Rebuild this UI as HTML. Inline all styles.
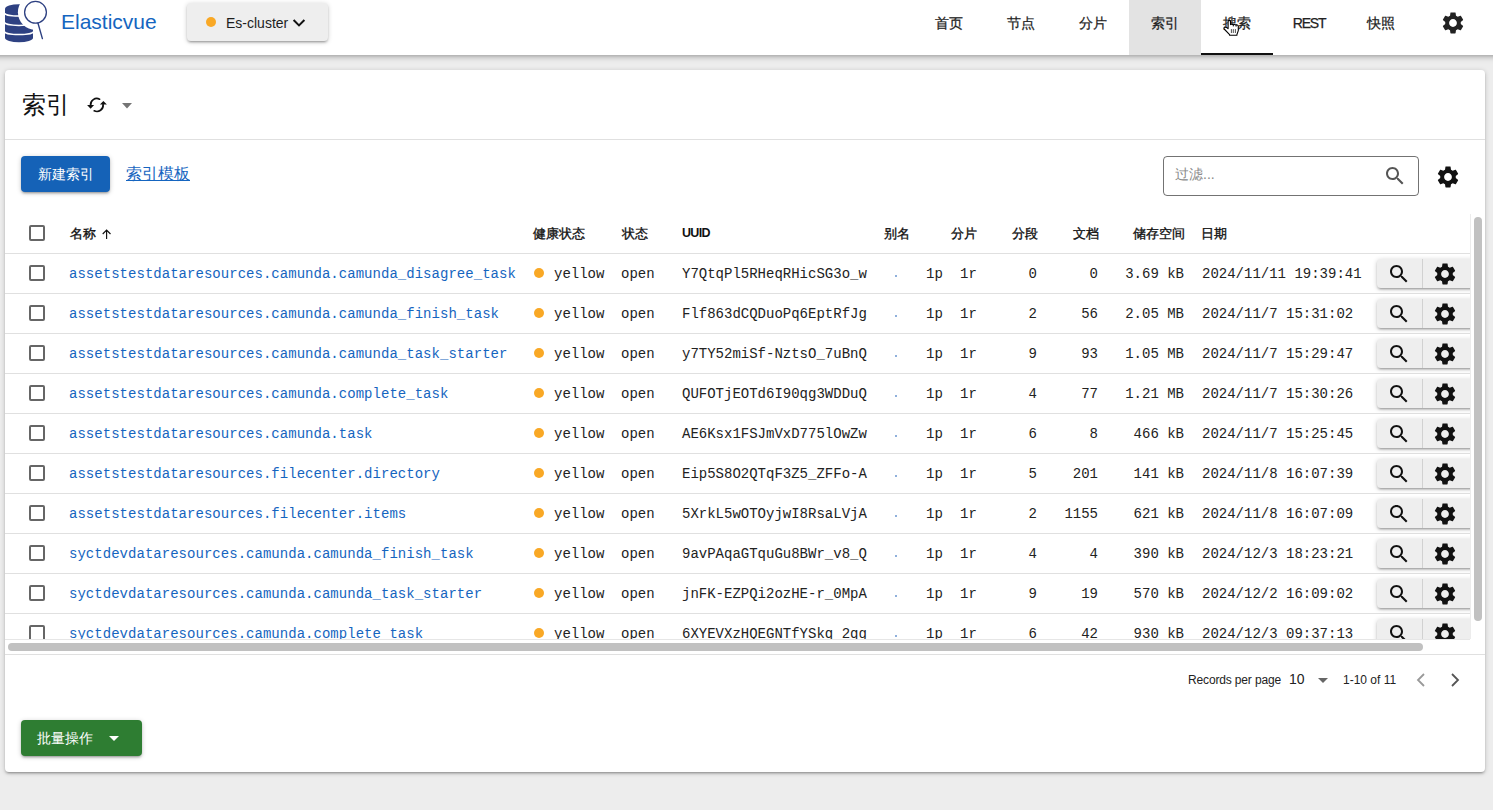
<!DOCTYPE html>
<html><head><meta charset="utf-8">
<style>
*{box-sizing:border-box;margin:0;padding:0}
html,body{width:1493px;height:810px;overflow:hidden;background:#ededed;font-family:"Liberation Sans",sans-serif;color:rgba(0,0,0,.87)}
.abs{position:absolute}
#hdr{position:absolute;left:-20px;top:0;width:1533px;height:55px;background:#fff;box-shadow:0 2px 4px -1px rgba(0,0,0,.25),0 4px 5px rgba(0,0,0,.1);z-index:5}
.brand{position:absolute;left:61px;top:10px;font-size:21px;color:#1565c0;white-space:nowrap}
.clbtn{position:absolute;left:187px;top:3px;width:141px;height:38px;background:#eee;border-radius:4px;box-shadow:0 1px 5px rgba(0,0,0,.2),0 2px 2px rgba(0,0,0,.14),0 3px 1px -2px rgba(0,0,0,.12)}
.tab{position:absolute;top:0;height:55px;width:72px;font-size:14px;text-align:center;line-height:46px;color:#222;-webkit-text-stroke:0.25px #222;white-space:nowrap}
#card{position:absolute;left:5px;top:70px;width:1480px;height:702px;background:#fff;border-radius:4px;box-shadow:0 1px 5px rgba(0,0,0,.2),0 2px 2px rgba(0,0,0,.14),0 3px 1px -2px rgba(0,0,0,.12)}
.title{position:absolute;left:17px;top:19px;font-size:24px;color:#111;white-space:nowrap}
.divider{position:absolute;left:0;height:1px;width:1480px;background:rgba(0,0,0,.12)}
.btnblue{position:absolute;left:16px;top:86px;width:89px;height:36px;background:#1562b7;border-radius:4px;color:#fff;font-size:14px;text-align:center;line-height:36px;box-shadow:0 1px 5px rgba(0,0,0,.2),0 2px 2px rgba(0,0,0,.14),0 3px 1px -2px rgba(0,0,0,.12)}
.link{position:absolute;left:121px;top:94px;font-size:16px;color:#1565c0;text-decoration:underline;white-space:nowrap}
.filter{position:absolute;left:1158px;top:86px;width:256px;height:40px;border:1px solid rgba(0,0,0,.55);border-radius:4px}
.ph{position:absolute;left:11px;top:9px;font-size:14px;color:#8a8a8a;white-space:nowrap}
#tbl{position:absolute;left:0;top:144px;width:1465px;height:425px;overflow:hidden}
.in{position:absolute;left:3px;top:0;width:1462px;height:40px}
.hrow{position:absolute;left:0;top:0;width:1465px;height:40px;border-bottom:1px solid rgba(0,0,0,.12)}
.th{position:absolute;top:11px;font-size:13px;font-weight:normal;-webkit-text-stroke:0.35px #111;color:#111;white-space:nowrap}
.row{position:absolute;left:0;width:1465px;height:40px;border-bottom:1px solid rgba(0,0,0,.12)}
.cb{position:absolute;width:16px;height:16px;border:2px solid #666;border-radius:2px}
.nm{position:absolute;top:12px;font-family:"Liberation Mono",monospace;font-size:14px;letter-spacing:0.03px;color:#1565c0;white-space:nowrap}
.mono{position:absolute;top:12px;font-family:"Liberation Mono",monospace;font-size:14px;color:#222;white-space:nowrap}
.dot{position:absolute;top:14px;width:10px;height:10px;border-radius:50%;background:#f9a825}
.adot{position:absolute;top:21px;width:2px;height:2px;background:#8fb0dc}
.btns{position:absolute;top:5px;width:110px;height:29px;background:#eee;border-radius:4px;box-shadow:0 1px 5px rgba(0,0,0,.2),0 2px 2px rgba(0,0,0,.14),0 3px 1px -2px rgba(0,0,0,.12)}
.b1{position:absolute;left:0;top:0;width:46px;height:29px;border-right:1px solid rgba(0,0,0,.12);color:#111}
.b2{position:absolute;left:47px;top:0;width:47px;height:29px;color:#111}
.b1 svg{position:absolute;left:10px;top:3px}
.b2 svg{position:absolute;left:8px;top:2px}
.vsb{position:absolute;left:1469px;top:147px;width:8px;height:404px;border-radius:4px;background:#c1c1c1}
.hsb{position:absolute;left:3px;top:573px;width:1415px;height:8px;border-radius:4px;background:#c1c1c1}
.btngreen{position:absolute;left:16px;top:650px;width:121px;height:36px;background:#2e7d32;border-radius:4px;color:#fff;font-size:14px;box-shadow:0 1px 5px rgba(0,0,0,.2),0 2px 2px rgba(0,0,0,.14),0 3px 1px -2px rgba(0,0,0,.12)}
.pg{position:absolute;font-size:12px;color:#222;white-space:nowrap}
</style></head><body>
<div id="hdr"><div class="abs" style="left:20px;top:0;width:1493px;height:55px">
 <svg class="abs" style="left:0;top:0" width="50" height="46" viewBox="0 0 50 46">
 <defs><mask id="lm" maskUnits="userSpaceOnUse" x="0" y="0" width="50" height="46">
  <rect x="0" y="0" width="50" height="46" fill="#fff"/>
  <circle cx="35.5" cy="12.3" r="17.6" fill="#000"/>
  <path d="M4.6 13 A14.4 3.1 0 0 0 33.4 13" fill="none" stroke="#000" stroke-width="1.5"/>
  <path d="M4.6 22.3 A14.4 3.1 0 0 0 33.4 22.3" fill="none" stroke="#000" stroke-width="1.5"/>
  <path d="M4.6 31.5 A14.4 3.1 0 0 0 33.4 31.5" fill="none" stroke="#000" stroke-width="1.5"/>
 </mask></defs>
 <g fill="#2e4182" mask="url(#lm)">
  <ellipse cx="19" cy="9" rx="14" ry="4.8"/>
  <rect x="5" y="9" width="28" height="29"/>
  <ellipse cx="19" cy="38" rx="14" ry="4.2"/>
 </g>
 <circle cx="35.5" cy="12.3" r="10.9" fill="none" stroke="#2e4182" stroke-width="1.3"/>
 <line x1="38" y1="23.2" x2="42.4" y2="38.6" stroke="#2e4182" stroke-width="1.4" stroke-linecap="round"/>
</svg>
 <div class="brand">Elasticvue</div>
 <div class="clbtn">
   <span class="abs" style="left:19px;top:14px;width:10px;height:10px;border-radius:50%;background:#f9a825"></span>
   <span class="abs" style="left:39px;top:12px;font-size:14px;color:#1d1d1d;white-space:nowrap">Es-cluster</span>
   <svg class="abs" style="left:105px;top:15px" width="14" height="10" viewBox="0 0 14 10"><path d="M1.6 2 L7 7.4 L12.4 2" fill="none" stroke="#111" stroke-width="2"/></svg>
 </div>
 <div class="tab" style="left:913px">首页</div>
 <div class="tab" style="left:985px">节点</div>
 <div class="tab" style="left:1057px">分片</div>
 <div class="tab" style="left:1129px;background:#e3e3e3">索引</div>
 <div class="tab" style="left:1201px">搜索<div class="abs" style="left:0;top:53px;width:72px;height:2px;background:#111"></div></div>
 <div class="tab" style="left:1273px;letter-spacing:-1.2px">REST</div>
 <div class="tab" style="left:1345px">快照</div>
 <div class="abs" style="left:1440px;top:10px;color:#222"><svg viewBox="0 0 24 24" width="26" height="26" style="display:block"><path d="M19.14 12.94c.04-.3.06-.61.06-.94 0-.32-.02-.64-.07-.94l2.03-1.58c.18-.14.23-.41.12-.61l-1.92-3.32c-.12-.22-.37-.29-.59-.22l-2.39.96c-.5-.38-1.03-.7-1.62-.94l-.36-2.54c-.04-.24-.24-.41-.48-.41h-3.84c-.24 0-.43.17-.47.41l-.36 2.54c-.59.24-1.130.57-1.62.94l-2.39-.96c-.22-.08-.47 0-.59.22L2.740 8.87c-.12.21-.08.47.12.61l2.03 1.58c-.05.3-.09.63-.09.94s.02.64.07.94l-2.03 1.58c-.18.14-.23.41-.12.61l1.92 3.32c.12.22.37.29.59.22l2.39-.96c.5.38 1.03.7 1.62.94l.36 2.54c.05.24.24.41.48.41h3.84c.24 0 .44-.17.47-.41l.36-2.54c.59-.24 1.13-.56 1.62-.94l2.39.96c.22.08.47 0 .59-.22l1.92-3.32c.12-.22.07-.47-.12-.61l-2.01-1.58zM12 15.6c-1.98 0-3.6-1.62-3.6-3.6s1.62-3.6 3.6-3.6 3.6 1.62 3.6 3.6-1.62 3.6-3.6 3.6z" fill="currentColor"/></svg></div>
 <svg class="abs" style="left:1215px;top:10px;z-index:9" width="40" height="30" viewBox="1215 10 40 30">
 <path d="M1228.1 28.3 L1228.1 21.3 Q1229.3 19.5 1230.5 21.3 L1230.5 24.6 Q1231.9 23.9 1233.3 24.7 Q1234.7 24.1 1236.1 24.9 Q1237.6 24.5 1238.3 26 L1238.3 30.6 L1236.9 34.6 L1236.9 35.3 L1229.6 35.3 L1229.6 34.6 L1224.2 29 Q1223.5 27.6 1224.8 27.1 Q1226.5 27 1228.1 28.6 Z" fill="#fff" stroke="#000" stroke-width="1.1" stroke-linejoin="round"/>
 <path d="M1231.4 29.1 V33 M1233.3 29.1 V33 M1235.4 29.1 V33" stroke="#222" stroke-width=".8"/>
 <path d="M1233.3 24.6 V26.4 M1236.1 24.8 V26.6" stroke="#000" stroke-width="1"/>
</svg>
</div></div>
<div id="card">
 <div class="title">索引</div>
 <svg class="abs" style="left:79px;top:24px" width="28" height="22" viewBox="84 94 28 22">
 <path d="M99.6 99.2 A6.2 6.2 0 0 0 90.6 105.3" fill="none" stroke="#111" stroke-width="1.7" stroke-linecap="round"/>
 <path d="M87.1 105.1 L94.1 105.1 L90.6 108.7 Z" fill="#111"/>
 <path d="M94.2 110.8 A6.2 6.2 0 0 0 103.1 104.5" fill="none" stroke="#111" stroke-width="1.7" stroke-linecap="round"/>
 <path d="M99.9 104.6 L106.9 104.6 L103.4 101.1 Z" fill="#111"/>
</svg>
 <svg class="abs" style="left:117px;top:33px" width="10" height="6" viewBox="0 0 10 6"><path d="M0 0 L10 0 L5 5.5 Z" fill="#757575"/></svg>
 <div class="divider" style="top:69px"></div>
 <div class="btnblue">新建索引</div>
 <div class="link">索引模板</div>
 <div class="filter"><span class="ph">过滤...</span><span class="abs" style="left:219px;top:7px;color:#555"><svg viewBox="0 0 24 24" width="24" height="24" style="display:block"><path d="M15.5 14h-.79l-.28-.27C15.41 12.59 16 11.11 16 9.5 16 5.91 13.09 3 9.5 3S3 5.910 3 9.5 5.91 16 9.5 16c1.61 0 3.09-.59 4.23-1.57l.27.28v.79l5 4.99L20.49 19l-4.99-5zm-6 0C7.01 14 5 11.99 5 9.5S7.01 5 9.5 5 14 7.01 14 9.5 11.99 14 9.5 14z" fill="currentColor"/></svg></span></div>
 <div class="abs" style="left:1430px;top:94px;color:#111"><svg viewBox="0 0 24 24" width="26" height="26" style="display:block"><path d="M19.14 12.94c.04-.3.06-.61.06-.94 0-.32-.02-.64-.07-.94l2.03-1.58c.18-.14.23-.41.12-.61l-1.92-3.32c-.12-.22-.37-.29-.59-.22l-2.39.96c-.5-.38-1.03-.7-1.62-.94l-.36-2.54c-.04-.24-.24-.41-.48-.41h-3.84c-.24 0-.43.17-.47.41l-.36 2.54c-.59.24-1.130.57-1.62.94l-2.39-.96c-.22-.08-.47 0-.59.22L2.740 8.87c-.12.21-.08.47.12.61l2.03 1.58c-.05.3-.09.63-.09.94s.02.64.07.94l-2.03 1.58c-.18.14-.23.41-.12.61l1.92 3.32c.12.22.37.29.59.22l2.39-.96c.5.38 1.03.7 1.62.94l.36 2.54c.05.24.24.41.48.41h3.84c.24 0 .44-.17.47-.41l.36-2.54c.59-.24 1.13-.56 1.62-.94l2.39.96c.22.08.47 0 .59-.22l1.92-3.32c.12-.22.07-.47-.12-.61l-2.01-1.58zM12 15.6c-1.98 0-3.6-1.62-3.6-3.6s1.62-3.6 3.6-3.6 3.6 1.62 3.6 3.6-1.62 3.6-3.6 3.6z" fill="currentColor"/></svg></div>
 <div id="tbl">
  <div class="hrow"><div class="in">
   <div class="cb" style="left:21px;top:11px"></div>
   <div class="th" style="left:62px">名称</div>
   <svg class="abs" style="left:94px;top:15px" width="10" height="11" viewBox="0 0 10 11"><path d="M4.6 1.2 V10 M0.7 5 L4.6 1.1 L8.5 5" fill="none" stroke="#111" stroke-width="1.15"/></svg>
   <div class="th" style="left:525px">健康状态</div>
   <div class="th" style="left:614px">状态</div>
   <div class="th" style="left:674px;top:12px;font-weight:bold;-webkit-text-stroke:0;font-size:12.5px;letter-spacing:-0.7px">UUID</div>
   <div class="th" style="left:876px">别名</div>
   <div class="th" style="left:943px">分片</div>
   <div class="th" style="left:1004px">分段</div>
   <div class="th" style="left:1065px">文档</div>
   <div class="th" style="left:1125px">储存空间</div>
   <div class="th" style="left:1193px">日期</div>
  </div></div>
  <div class="row" style="top:40px"><div class="in">
<div class="cb" style="left:21px;top:11px"></div>
<span class="nm" style="left:61px">assetstestdataresources.camunda.camunda_disagree_task</span>
<span class="dot" style="left:526px"></span>
<span class="mono" style="left:546px">yellow</span>
<span class="mono" style="left:613px">open</span>
<span class="mono" style="left:674px">Y7QtqPl5RHeqRHicSG3o_w</span>
<span class="adot" style="left:887px"></span>
<span class="mono" style="left:918px">1p</span>
<span class="mono" style="left:952px">1r</span>
<span class="mono r" style="right:433px">0</span>
<span class="mono r" style="right:372px">0</span>
<span class="mono r" style="right:286px">3.69 kB</span>
<span class="mono" style="left:1194px">2024/11/11 19:39:41</span>
<div class="btns" style="left:1369px"><div class="b1"><svg viewBox="0 0 24 24" width="24" height="24" style="display:block"><path d="M15.5 14h-.79l-.28-.27C15.41 12.59 16 11.11 16 9.5 16 5.91 13.09 3 9.5 3S3 5.910 3 9.5 5.91 16 9.5 16c1.61 0 3.09-.59 4.23-1.57l.27.28v.79l5 4.99L20.49 19l-4.99-5zm-6 0C7.01 14 5 11.99 5 9.5S7.01 5 9.5 5 14 7.01 14 9.5 11.99 14 9.5 14z" fill="currentColor"/></svg></div><div class="b2"><svg viewBox="0 0 24 24" width="26" height="26" style="display:block"><path d="M19.14 12.94c.04-.3.06-.61.06-.94 0-.32-.02-.64-.07-.94l2.03-1.58c.18-.14.23-.41.12-.61l-1.92-3.32c-.12-.22-.37-.29-.59-.22l-2.39.96c-.5-.38-1.03-.7-1.62-.94l-.36-2.54c-.04-.24-.24-.41-.48-.41h-3.84c-.24 0-.43.17-.47.41l-.36 2.54c-.59.24-1.130.57-1.62.94l-2.39-.96c-.22-.08-.47 0-.59.22L2.740 8.87c-.12.21-.08.47.12.61l2.03 1.58c-.05.3-.09.63-.09.94s.02.64.07.94l-2.03 1.58c-.18.14-.23.41-.12.61l1.92 3.32c.12.22.37.29.59.22l2.39-.96c.5.38 1.03.7 1.62.94l.36 2.54c.05.24.24.41.48.41h3.84c.24 0 .44-.17.47-.41l.36-2.54c.59-.24 1.13-.56 1.62-.94l2.39.96c.22.08.47 0 .59-.22l1.92-3.32c.12-.22.07-.47-.12-.61l-2.01-1.58zM12 15.6c-1.98 0-3.6-1.62-3.6-3.6s1.62-3.6 3.6-3.6 3.6 1.62 3.6 3.6-1.62 3.6-3.6 3.6z" fill="currentColor"/></svg></div></div>
</div></div><div class="row" style="top:80px"><div class="in">
<div class="cb" style="left:21px;top:11px"></div>
<span class="nm" style="left:61px">assetstestdataresources.camunda.camunda_finish_task</span>
<span class="dot" style="left:526px"></span>
<span class="mono" style="left:546px">yellow</span>
<span class="mono" style="left:613px">open</span>
<span class="mono" style="left:674px">Flf863dCQDuoPq6EptRfJg</span>
<span class="adot" style="left:887px"></span>
<span class="mono" style="left:918px">1p</span>
<span class="mono" style="left:952px">1r</span>
<span class="mono r" style="right:433px">2</span>
<span class="mono r" style="right:372px">56</span>
<span class="mono r" style="right:286px">2.05 MB</span>
<span class="mono" style="left:1194px">2024/11/7 15:31:02</span>
<div class="btns" style="left:1369px"><div class="b1"><svg viewBox="0 0 24 24" width="24" height="24" style="display:block"><path d="M15.5 14h-.79l-.28-.27C15.41 12.59 16 11.11 16 9.5 16 5.91 13.09 3 9.5 3S3 5.910 3 9.5 5.91 16 9.5 16c1.61 0 3.09-.59 4.23-1.57l.27.28v.79l5 4.99L20.49 19l-4.99-5zm-6 0C7.01 14 5 11.99 5 9.5S7.01 5 9.5 5 14 7.01 14 9.5 11.99 14 9.5 14z" fill="currentColor"/></svg></div><div class="b2"><svg viewBox="0 0 24 24" width="26" height="26" style="display:block"><path d="M19.14 12.94c.04-.3.06-.61.06-.94 0-.32-.02-.64-.07-.94l2.03-1.58c.18-.14.23-.41.12-.61l-1.92-3.32c-.12-.22-.37-.29-.59-.22l-2.39.96c-.5-.38-1.03-.7-1.62-.94l-.36-2.54c-.04-.24-.24-.41-.48-.41h-3.84c-.24 0-.43.17-.47.41l-.36 2.54c-.59.24-1.130.57-1.62.94l-2.39-.96c-.22-.08-.47 0-.59.22L2.740 8.87c-.12.21-.08.47.12.61l2.03 1.58c-.05.3-.09.63-.09.94s.02.64.07.94l-2.03 1.58c-.18.14-.23.41-.12.61l1.92 3.32c.12.22.37.29.59.22l2.39-.96c.5.38 1.03.7 1.62.94l.36 2.54c.05.24.24.41.48.41h3.84c.24 0 .44-.17.47-.41l.36-2.54c.59-.24 1.13-.56 1.62-.94l2.39.96c.22.08.47 0 .59-.22l1.92-3.32c.12-.22.07-.47-.12-.61l-2.01-1.58zM12 15.6c-1.98 0-3.6-1.62-3.6-3.6s1.62-3.6 3.6-3.6 3.6 1.62 3.6 3.6-1.62 3.6-3.6 3.6z" fill="currentColor"/></svg></div></div>
</div></div><div class="row" style="top:120px"><div class="in">
<div class="cb" style="left:21px;top:11px"></div>
<span class="nm" style="left:61px">assetstestdataresources.camunda.camunda_task_starter</span>
<span class="dot" style="left:526px"></span>
<span class="mono" style="left:546px">yellow</span>
<span class="mono" style="left:613px">open</span>
<span class="mono" style="left:674px">y7TY52miSf-NztsO_7uBnQ</span>
<span class="adot" style="left:887px"></span>
<span class="mono" style="left:918px">1p</span>
<span class="mono" style="left:952px">1r</span>
<span class="mono r" style="right:433px">9</span>
<span class="mono r" style="right:372px">93</span>
<span class="mono r" style="right:286px">1.05 MB</span>
<span class="mono" style="left:1194px">2024/11/7 15:29:47</span>
<div class="btns" style="left:1369px"><div class="b1"><svg viewBox="0 0 24 24" width="24" height="24" style="display:block"><path d="M15.5 14h-.79l-.28-.27C15.41 12.59 16 11.11 16 9.5 16 5.91 13.09 3 9.5 3S3 5.910 3 9.5 5.91 16 9.5 16c1.61 0 3.09-.59 4.23-1.57l.27.28v.79l5 4.99L20.49 19l-4.99-5zm-6 0C7.01 14 5 11.99 5 9.5S7.01 5 9.5 5 14 7.01 14 9.5 11.99 14 9.5 14z" fill="currentColor"/></svg></div><div class="b2"><svg viewBox="0 0 24 24" width="26" height="26" style="display:block"><path d="M19.14 12.94c.04-.3.06-.61.06-.94 0-.32-.02-.64-.07-.94l2.03-1.58c.18-.14.23-.41.12-.61l-1.92-3.32c-.12-.22-.37-.29-.59-.22l-2.39.96c-.5-.38-1.03-.7-1.62-.94l-.36-2.54c-.04-.24-.24-.41-.48-.41h-3.84c-.24 0-.43.17-.47.41l-.36 2.54c-.59.24-1.130.57-1.62.94l-2.39-.96c-.22-.08-.47 0-.59.22L2.740 8.87c-.12.21-.08.47.12.61l2.03 1.58c-.05.3-.09.63-.09.94s.02.64.07.94l-2.03 1.58c-.18.14-.23.41-.12.61l1.92 3.32c.12.22.37.29.59.22l2.39-.96c.5.38 1.03.7 1.62.94l.36 2.54c.05.24.24.41.48.41h3.84c.24 0 .44-.17.47-.41l.36-2.54c.59-.24 1.13-.56 1.62-.94l2.39.96c.22.08.47 0 .59-.22l1.92-3.32c.12-.22.07-.47-.12-.61l-2.01-1.58zM12 15.6c-1.98 0-3.6-1.62-3.6-3.6s1.62-3.6 3.6-3.6 3.6 1.62 3.6 3.6-1.62 3.6-3.6 3.6z" fill="currentColor"/></svg></div></div>
</div></div><div class="row" style="top:160px"><div class="in">
<div class="cb" style="left:21px;top:11px"></div>
<span class="nm" style="left:61px">assetstestdataresources.camunda.complete_task</span>
<span class="dot" style="left:526px"></span>
<span class="mono" style="left:546px">yellow</span>
<span class="mono" style="left:613px">open</span>
<span class="mono" style="left:674px">QUFOTjEOTd6I90qg3WDDuQ</span>
<span class="adot" style="left:887px"></span>
<span class="mono" style="left:918px">1p</span>
<span class="mono" style="left:952px">1r</span>
<span class="mono r" style="right:433px">4</span>
<span class="mono r" style="right:372px">77</span>
<span class="mono r" style="right:286px">1.21 MB</span>
<span class="mono" style="left:1194px">2024/11/7 15:30:26</span>
<div class="btns" style="left:1369px"><div class="b1"><svg viewBox="0 0 24 24" width="24" height="24" style="display:block"><path d="M15.5 14h-.79l-.28-.27C15.41 12.59 16 11.11 16 9.5 16 5.91 13.09 3 9.5 3S3 5.910 3 9.5 5.91 16 9.5 16c1.61 0 3.09-.59 4.23-1.57l.27.28v.79l5 4.99L20.49 19l-4.99-5zm-6 0C7.01 14 5 11.99 5 9.5S7.01 5 9.5 5 14 7.01 14 9.5 11.99 14 9.5 14z" fill="currentColor"/></svg></div><div class="b2"><svg viewBox="0 0 24 24" width="26" height="26" style="display:block"><path d="M19.14 12.94c.04-.3.06-.61.06-.94 0-.32-.02-.64-.07-.94l2.03-1.58c.18-.14.23-.41.12-.61l-1.92-3.32c-.12-.22-.37-.29-.59-.22l-2.39.96c-.5-.38-1.03-.7-1.62-.94l-.36-2.54c-.04-.24-.24-.41-.48-.41h-3.84c-.24 0-.43.17-.47.41l-.36 2.54c-.59.24-1.130.57-1.62.94l-2.39-.96c-.22-.08-.47 0-.59.22L2.740 8.87c-.12.21-.08.47.12.61l2.03 1.58c-.05.3-.09.63-.09.94s.02.64.07.94l-2.03 1.58c-.18.14-.23.41-.12.61l1.92 3.32c.12.22.37.29.59.22l2.39-.96c.5.38 1.03.7 1.62.94l.36 2.54c.05.24.24.41.48.41h3.84c.24 0 .44-.17.47-.41l.36-2.54c.59-.24 1.13-.56 1.62-.94l2.39.96c.22.08.47 0 .59-.22l1.92-3.32c.12-.22.07-.47-.12-.61l-2.01-1.58zM12 15.6c-1.98 0-3.6-1.62-3.6-3.6s1.62-3.6 3.6-3.6 3.6 1.62 3.6 3.6-1.62 3.6-3.6 3.6z" fill="currentColor"/></svg></div></div>
</div></div><div class="row" style="top:200px"><div class="in">
<div class="cb" style="left:21px;top:11px"></div>
<span class="nm" style="left:61px">assetstestdataresources.camunda.task</span>
<span class="dot" style="left:526px"></span>
<span class="mono" style="left:546px">yellow</span>
<span class="mono" style="left:613px">open</span>
<span class="mono" style="left:674px">AE6Ksx1FSJmVxD775lOwZw</span>
<span class="adot" style="left:887px"></span>
<span class="mono" style="left:918px">1p</span>
<span class="mono" style="left:952px">1r</span>
<span class="mono r" style="right:433px">6</span>
<span class="mono r" style="right:372px">8</span>
<span class="mono r" style="right:286px">466 kB</span>
<span class="mono" style="left:1194px">2024/11/7 15:25:45</span>
<div class="btns" style="left:1369px"><div class="b1"><svg viewBox="0 0 24 24" width="24" height="24" style="display:block"><path d="M15.5 14h-.79l-.28-.27C15.41 12.59 16 11.11 16 9.5 16 5.91 13.09 3 9.5 3S3 5.910 3 9.5 5.91 16 9.5 16c1.61 0 3.09-.59 4.23-1.57l.27.28v.79l5 4.99L20.49 19l-4.99-5zm-6 0C7.01 14 5 11.99 5 9.5S7.01 5 9.5 5 14 7.01 14 9.5 11.99 14 9.5 14z" fill="currentColor"/></svg></div><div class="b2"><svg viewBox="0 0 24 24" width="26" height="26" style="display:block"><path d="M19.14 12.94c.04-.3.06-.61.06-.94 0-.32-.02-.64-.07-.94l2.03-1.58c.18-.14.23-.41.12-.61l-1.92-3.32c-.12-.22-.37-.29-.59-.22l-2.39.96c-.5-.38-1.03-.7-1.62-.94l-.36-2.54c-.04-.24-.24-.41-.48-.41h-3.84c-.24 0-.43.17-.47.41l-.36 2.54c-.59.24-1.130.57-1.62.94l-2.39-.96c-.22-.08-.47 0-.59.22L2.740 8.87c-.12.21-.08.47.12.61l2.03 1.58c-.05.3-.09.63-.09.94s.02.64.07.94l-2.03 1.58c-.18.14-.23.41-.12.61l1.92 3.32c.12.22.37.29.59.22l2.39-.96c.5.38 1.03.7 1.62.94l.36 2.54c.05.24.24.41.48.41h3.84c.24 0 .44-.17.47-.41l.36-2.54c.59-.24 1.13-.56 1.62-.94l2.39.96c.22.08.47 0 .59-.22l1.92-3.32c.12-.22.07-.47-.12-.61l-2.01-1.58zM12 15.6c-1.98 0-3.6-1.62-3.6-3.6s1.62-3.6 3.6-3.6 3.6 1.62 3.6 3.6-1.62 3.6-3.6 3.6z" fill="currentColor"/></svg></div></div>
</div></div><div class="row" style="top:240px"><div class="in">
<div class="cb" style="left:21px;top:11px"></div>
<span class="nm" style="left:61px">assetstestdataresources.filecenter.directory</span>
<span class="dot" style="left:526px"></span>
<span class="mono" style="left:546px">yellow</span>
<span class="mono" style="left:613px">open</span>
<span class="mono" style="left:674px">Eip5S8O2QTqF3Z5_ZFFo-A</span>
<span class="adot" style="left:887px"></span>
<span class="mono" style="left:918px">1p</span>
<span class="mono" style="left:952px">1r</span>
<span class="mono r" style="right:433px">5</span>
<span class="mono r" style="right:372px">201</span>
<span class="mono r" style="right:286px">141 kB</span>
<span class="mono" style="left:1194px">2024/11/8 16:07:39</span>
<div class="btns" style="left:1369px"><div class="b1"><svg viewBox="0 0 24 24" width="24" height="24" style="display:block"><path d="M15.5 14h-.79l-.28-.27C15.41 12.59 16 11.11 16 9.5 16 5.91 13.09 3 9.5 3S3 5.910 3 9.5 5.91 16 9.5 16c1.61 0 3.09-.59 4.23-1.57l.27.28v.79l5 4.99L20.49 19l-4.99-5zm-6 0C7.01 14 5 11.99 5 9.5S7.01 5 9.5 5 14 7.01 14 9.5 11.99 14 9.5 14z" fill="currentColor"/></svg></div><div class="b2"><svg viewBox="0 0 24 24" width="26" height="26" style="display:block"><path d="M19.14 12.94c.04-.3.06-.61.06-.94 0-.32-.02-.64-.07-.94l2.03-1.58c.18-.14.23-.41.12-.61l-1.92-3.32c-.12-.22-.37-.29-.59-.22l-2.39.96c-.5-.38-1.03-.7-1.62-.94l-.36-2.54c-.04-.24-.24-.41-.48-.41h-3.84c-.24 0-.43.17-.47.41l-.36 2.54c-.59.24-1.130.57-1.62.94l-2.39-.96c-.22-.08-.47 0-.59.22L2.740 8.87c-.12.21-.08.47.12.61l2.03 1.58c-.05.3-.09.63-.09.94s.02.64.07.94l-2.03 1.58c-.18.14-.23.41-.12.61l1.92 3.32c.12.22.37.29.59.22l2.39-.96c.5.38 1.03.7 1.62.94l.36 2.54c.05.24.24.41.48.41h3.84c.24 0 .44-.17.47-.41l.36-2.54c.59-.24 1.13-.56 1.62-.94l2.39.96c.22.08.47 0 .59-.22l1.92-3.32c.12-.22.07-.47-.12-.61l-2.01-1.58zM12 15.6c-1.98 0-3.6-1.62-3.6-3.6s1.62-3.6 3.6-3.6 3.6 1.62 3.6 3.6-1.62 3.6-3.6 3.6z" fill="currentColor"/></svg></div></div>
</div></div><div class="row" style="top:280px"><div class="in">
<div class="cb" style="left:21px;top:11px"></div>
<span class="nm" style="left:61px">assetstestdataresources.filecenter.items</span>
<span class="dot" style="left:526px"></span>
<span class="mono" style="left:546px">yellow</span>
<span class="mono" style="left:613px">open</span>
<span class="mono" style="left:674px">5XrkL5wOTOyjwI8RsaLVjA</span>
<span class="adot" style="left:887px"></span>
<span class="mono" style="left:918px">1p</span>
<span class="mono" style="left:952px">1r</span>
<span class="mono r" style="right:433px">2</span>
<span class="mono r" style="right:372px">1155</span>
<span class="mono r" style="right:286px">621 kB</span>
<span class="mono" style="left:1194px">2024/11/8 16:07:09</span>
<div class="btns" style="left:1369px"><div class="b1"><svg viewBox="0 0 24 24" width="24" height="24" style="display:block"><path d="M15.5 14h-.79l-.28-.27C15.41 12.59 16 11.11 16 9.5 16 5.91 13.09 3 9.5 3S3 5.910 3 9.5 5.91 16 9.5 16c1.61 0 3.09-.59 4.23-1.57l.27.28v.79l5 4.99L20.49 19l-4.99-5zm-6 0C7.01 14 5 11.99 5 9.5S7.01 5 9.5 5 14 7.01 14 9.5 11.99 14 9.5 14z" fill="currentColor"/></svg></div><div class="b2"><svg viewBox="0 0 24 24" width="26" height="26" style="display:block"><path d="M19.14 12.94c.04-.3.06-.61.06-.94 0-.32-.02-.64-.07-.94l2.03-1.58c.18-.14.23-.41.12-.61l-1.92-3.32c-.12-.22-.37-.29-.59-.22l-2.39.96c-.5-.38-1.03-.7-1.62-.94l-.36-2.54c-.04-.24-.24-.41-.48-.41h-3.84c-.24 0-.43.17-.47.41l-.36 2.54c-.59.24-1.130.57-1.62.94l-2.39-.96c-.22-.08-.47 0-.59.22L2.740 8.87c-.12.21-.08.47.12.61l2.03 1.58c-.05.3-.09.63-.09.94s.02.64.07.94l-2.03 1.58c-.18.14-.23.41-.12.61l1.92 3.32c.12.22.37.29.59.22l2.39-.96c.5.38 1.03.7 1.62.94l.36 2.54c.05.24.24.41.48.41h3.84c.24 0 .44-.17.47-.41l.36-2.54c.59-.24 1.13-.56 1.62-.94l2.39.96c.22.08.47 0 .59-.22l1.92-3.32c.12-.22.07-.47-.12-.61l-2.01-1.58zM12 15.6c-1.98 0-3.6-1.62-3.6-3.6s1.62-3.6 3.6-3.6 3.6 1.62 3.6 3.6-1.62 3.6-3.6 3.6z" fill="currentColor"/></svg></div></div>
</div></div><div class="row" style="top:320px"><div class="in">
<div class="cb" style="left:21px;top:11px"></div>
<span class="nm" style="left:61px">syctdevdataresources.camunda.camunda_finish_task</span>
<span class="dot" style="left:526px"></span>
<span class="mono" style="left:546px">yellow</span>
<span class="mono" style="left:613px">open</span>
<span class="mono" style="left:674px">9avPAqaGTquGu8BWr_v8_Q</span>
<span class="adot" style="left:887px"></span>
<span class="mono" style="left:918px">1p</span>
<span class="mono" style="left:952px">1r</span>
<span class="mono r" style="right:433px">4</span>
<span class="mono r" style="right:372px">4</span>
<span class="mono r" style="right:286px">390 kB</span>
<span class="mono" style="left:1194px">2024/12/3 18:23:21</span>
<div class="btns" style="left:1369px"><div class="b1"><svg viewBox="0 0 24 24" width="24" height="24" style="display:block"><path d="M15.5 14h-.79l-.28-.27C15.41 12.59 16 11.11 16 9.5 16 5.91 13.09 3 9.5 3S3 5.910 3 9.5 5.91 16 9.5 16c1.61 0 3.09-.59 4.23-1.57l.27.28v.79l5 4.99L20.49 19l-4.99-5zm-6 0C7.01 14 5 11.99 5 9.5S7.01 5 9.5 5 14 7.01 14 9.5 11.99 14 9.5 14z" fill="currentColor"/></svg></div><div class="b2"><svg viewBox="0 0 24 24" width="26" height="26" style="display:block"><path d="M19.14 12.94c.04-.3.06-.61.06-.94 0-.32-.02-.64-.07-.94l2.03-1.58c.18-.14.23-.41.12-.61l-1.92-3.32c-.12-.22-.37-.29-.59-.22l-2.39.96c-.5-.38-1.03-.7-1.62-.94l-.36-2.54c-.04-.24-.24-.41-.48-.41h-3.84c-.24 0-.43.17-.47.41l-.36 2.54c-.59.24-1.130.57-1.62.94l-2.39-.96c-.22-.08-.47 0-.59.22L2.740 8.87c-.12.21-.08.47.12.61l2.03 1.58c-.05.3-.09.63-.09.94s.02.64.07.94l-2.03 1.58c-.18.14-.23.41-.12.61l1.92 3.32c.12.22.37.29.59.22l2.39-.96c.5.38 1.03.7 1.62.94l.36 2.54c.05.24.24.41.48.41h3.84c.24 0 .44-.17.47-.41l.36-2.54c.59-.24 1.13-.56 1.62-.94l2.39.96c.22.08.47 0 .59-.22l1.92-3.32c.12-.22.07-.47-.12-.61l-2.01-1.58zM12 15.6c-1.98 0-3.6-1.62-3.6-3.6s1.62-3.6 3.6-3.6 3.6 1.62 3.6 3.6-1.62 3.6-3.6 3.6z" fill="currentColor"/></svg></div></div>
</div></div><div class="row" style="top:360px"><div class="in">
<div class="cb" style="left:21px;top:11px"></div>
<span class="nm" style="left:61px">syctdevdataresources.camunda.camunda_task_starter</span>
<span class="dot" style="left:526px"></span>
<span class="mono" style="left:546px">yellow</span>
<span class="mono" style="left:613px">open</span>
<span class="mono" style="left:674px">jnFK-EZPQi2ozHE-r_0MpA</span>
<span class="adot" style="left:887px"></span>
<span class="mono" style="left:918px">1p</span>
<span class="mono" style="left:952px">1r</span>
<span class="mono r" style="right:433px">9</span>
<span class="mono r" style="right:372px">19</span>
<span class="mono r" style="right:286px">570 kB</span>
<span class="mono" style="left:1194px">2024/12/2 16:09:02</span>
<div class="btns" style="left:1369px"><div class="b1"><svg viewBox="0 0 24 24" width="24" height="24" style="display:block"><path d="M15.5 14h-.79l-.28-.27C15.41 12.59 16 11.11 16 9.5 16 5.91 13.09 3 9.5 3S3 5.910 3 9.5 5.91 16 9.5 16c1.61 0 3.09-.59 4.23-1.57l.27.28v.79l5 4.99L20.49 19l-4.99-5zm-6 0C7.01 14 5 11.99 5 9.5S7.01 5 9.5 5 14 7.01 14 9.5 11.99 14 9.5 14z" fill="currentColor"/></svg></div><div class="b2"><svg viewBox="0 0 24 24" width="26" height="26" style="display:block"><path d="M19.14 12.94c.04-.3.06-.61.06-.94 0-.32-.02-.64-.07-.94l2.03-1.58c.18-.14.23-.41.12-.61l-1.92-3.32c-.12-.22-.37-.29-.59-.22l-2.39.96c-.5-.38-1.03-.7-1.62-.94l-.36-2.54c-.04-.24-.24-.41-.48-.41h-3.84c-.24 0-.43.17-.47.41l-.36 2.54c-.59.24-1.130.57-1.62.94l-2.39-.96c-.22-.08-.47 0-.59.22L2.740 8.87c-.12.21-.08.47.12.61l2.03 1.58c-.05.3-.09.63-.09.94s.02.64.07.94l-2.03 1.58c-.18.14-.23.41-.12.61l1.92 3.32c.12.22.37.29.59.22l2.39-.96c.5.38 1.03.7 1.62.94l.36 2.54c.05.24.24.41.48.41h3.84c.24 0 .44-.17.47-.41l.36-2.54c.59-.24 1.13-.56 1.62-.94l2.39.96c.22.08.47 0 .59-.22l1.92-3.32c.12-.22.07-.47-.12-.61l-2.01-1.58zM12 15.6c-1.98 0-3.6-1.62-3.6-3.6s1.62-3.6 3.6-3.6 3.6 1.62 3.6 3.6-1.62 3.6-3.6 3.6z" fill="currentColor"/></svg></div></div>
</div></div><div class="row" style="top:400px"><div class="in">
<div class="cb" style="left:21px;top:11px"></div>
<span class="nm" style="left:61px">syctdevdataresources.camunda.complete_task</span>
<span class="dot" style="left:526px"></span>
<span class="mono" style="left:546px">yellow</span>
<span class="mono" style="left:613px">open</span>
<span class="mono" style="left:674px">6XYEVXzHQEGNTfYSkq_2qg</span>
<span class="adot" style="left:887px"></span>
<span class="mono" style="left:918px">1p</span>
<span class="mono" style="left:952px">1r</span>
<span class="mono r" style="right:433px">6</span>
<span class="mono r" style="right:372px">42</span>
<span class="mono r" style="right:286px">930 kB</span>
<span class="mono" style="left:1194px">2024/12/3 09:37:13</span>
<div class="btns" style="left:1369px"><div class="b1"><svg viewBox="0 0 24 24" width="24" height="24" style="display:block"><path d="M15.5 14h-.79l-.28-.27C15.41 12.59 16 11.11 16 9.5 16 5.91 13.09 3 9.5 3S3 5.910 3 9.5 5.91 16 9.5 16c1.61 0 3.09-.59 4.23-1.57l.27.28v.79l5 4.99L20.49 19l-4.99-5zm-6 0C7.01 14 5 11.99 5 9.5S7.01 5 9.5 5 14 7.01 14 9.5 11.99 14 9.5 14z" fill="currentColor"/></svg></div><div class="b2"><svg viewBox="0 0 24 24" width="26" height="26" style="display:block"><path d="M19.14 12.94c.04-.3.06-.61.06-.94 0-.32-.02-.64-.07-.94l2.03-1.58c.18-.14.23-.41.12-.61l-1.92-3.32c-.12-.22-.37-.29-.59-.22l-2.39.96c-.5-.38-1.03-.7-1.62-.94l-.36-2.54c-.04-.24-.24-.41-.48-.41h-3.84c-.24 0-.43.17-.47.41l-.36 2.54c-.59.24-1.130.57-1.62.94l-2.39-.96c-.22-.08-.47 0-.59.22L2.740 8.87c-.12.21-.08.47.12.61l2.03 1.58c-.05.3-.09.63-.09.94s.02.64.07.94l-2.03 1.58c-.18.14-.23.41-.12.61l1.92 3.32c.12.22.37.29.59.22l2.39-.96c.5.38 1.03.7 1.62.94l.36 2.54c.05.24.24.41.48.41h3.84c.24 0 .44-.17.47-.41l.36-2.54c.59-.24 1.13-.56 1.62-.94l2.39.96c.22.08.47 0 .59-.22l1.92-3.32c.12-.22.07-.47-.12-.61l-2.01-1.58zM12 15.6c-1.98 0-3.6-1.62-3.6-3.6s1.62-3.6 3.6-3.6 3.6 1.62 3.6 3.6-1.62 3.6-3.6 3.6z" fill="currentColor"/></svg></div></div>
</div></div>
 </div>
 <div class="abs" style="left:1465px;top:144px;width:1px;height:425px;background:#ececec"></div>
 <div class="abs" style="left:0;top:569px;width:1465px;height:1px;background:#e6e6e6"></div>
 <div class="vsb"></div>
 <div class="hsb"></div>
 <div class="divider" style="top:584px"></div>
 <div class="pg" style="left:1183px;top:603px;letter-spacing:-0.15px">Records per page</div>
 <div class="pg" style="left:1284px;top:601px;font-size:14px">10</div>
 <svg class="abs" style="left:1313px;top:608px" width="10" height="6" viewBox="0 0 10 6"><path d="M0 0 L10 0 L5 5 Z" fill="#666"/></svg>
 <div class="pg" style="left:1338px;top:603px">1-10 of 11</div>
 <svg class="abs" style="left:1411px;top:603px" width="10" height="14" viewBox="0 0 10 14"><path d="M8 1 L2 7 L8 13" fill="none" stroke="#999" stroke-width="1.8"/></svg>
 <svg class="abs" style="left:1445px;top:603px" width="10" height="14" viewBox="0 0 10 14"><path d="M2 1 L8 7 L2 13" fill="none" stroke="#555" stroke-width="1.8"/></svg>
 <div class="btngreen"><span class="abs" style="left:16px;top:10px;white-space:nowrap">批量操作</span><svg class="abs" style="left:88px;top:16px" width="10" height="6" viewBox="0 0 10 6"><path d="M0 0 L10 0 L5 5 Z" fill="#fff"/></svg></div>
</div>
</body></html>
